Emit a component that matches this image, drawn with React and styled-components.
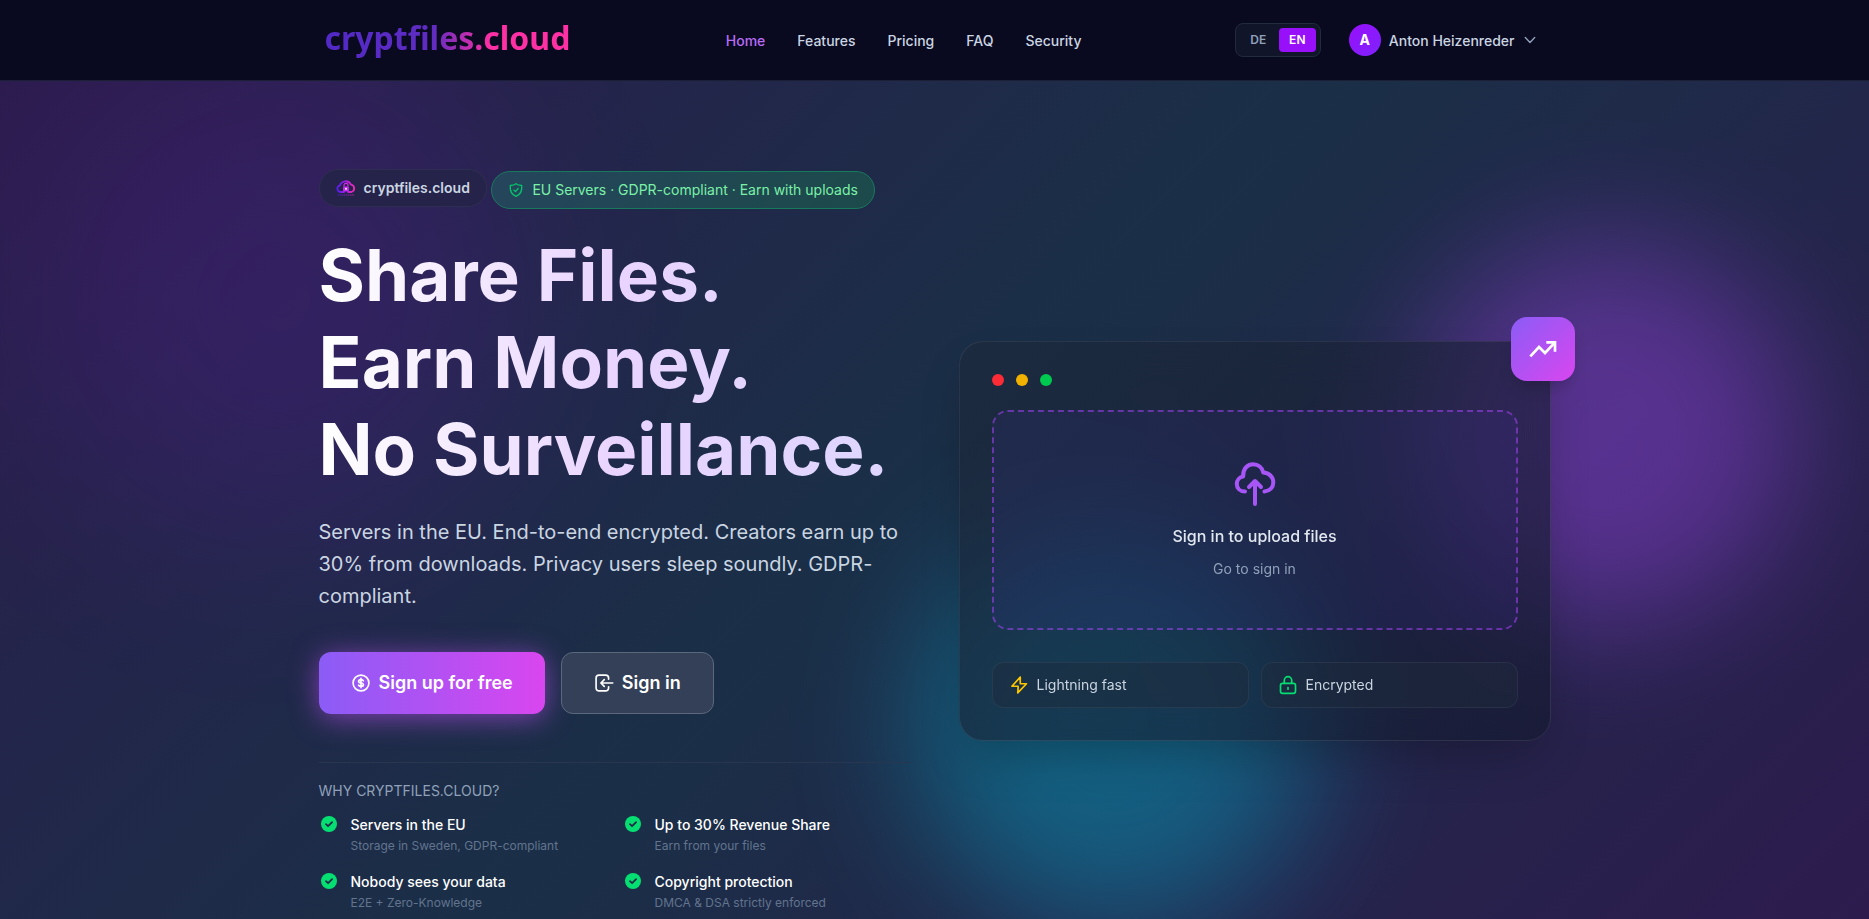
import React, { useState } from "react";
import styled, { createGlobalStyle, css } from "styled-components";

const navItems = ["Home", "Features", "Pricing", "FAQ", "Security"];

const reasons = [
  { title: "Servers in the EU", text: "Storage in Sweden, GDPR-compliant" },
  { title: "Up to 30% Revenue Share", text: "Earn from your files" },
  { title: "Nobody sees your data", text: "E2E + Zero-Knowledge" },
  { title: "Copyright protection", text: "DMCA & DSA strictly enforced" },
];

const CloudLogo = () => (
  <svg width="20" height="20" viewBox="0 0 20 20" fill="none" aria-hidden="true">
    <defs>
      <linearGradient id="cloud-logo" x1="0" y1="0" x2="20" y2="0" gradientUnits="userSpaceOnUse">
        <stop offset="0" stopColor="#4b1df0" />
        <stop offset="0.5" stopColor="#a51ee6" />
        <stop offset="1" stopColor="#ff2fa8" />
      </linearGradient>
    </defs>
    <path
      d="M8 14H4.5a3.3 3.3 0 0 1-.6-6.5A6 6 0 0 1 15 6.6a3.8 3.8 0 0 1 .4 7.4H12"
      stroke="url(#cloud-logo)"
      strokeWidth="1.8"
      strokeLinecap="round"
    />
    <path d="M8 9V7.4a2 2 0 0 1 4 0V9" stroke="#d02ee8" strokeWidth="1.2" />
    <rect x="7" y="8.6" width="6" height="5" rx="1.6" fill="#c42af0" />
    <circle cx="10" cy="10.8" r="1" fill="#fff" />
    <path d="M1.5 17h17" stroke="url(#cloud-logo)" strokeWidth="1" strokeDasharray="1.5 0.6" opacity="0.7" />
  </svg>
);

const ShieldIcon = () => (
  <svg width="16" height="16" viewBox="0 0 24 24" fill="none" stroke="#05c46b" strokeWidth="2" strokeLinecap="round" strokeLinejoin="round" aria-hidden="true">
    <path d="M12 2.5c2.6 2 5.3 2.5 8.5 2.7.8 8.3-1.7 13.6-8.5 16.3-6.8-2.7-9.3-8-8.5-16.3C6.7 5 9.4 4.5 12 2.5z" />
    <path d="M8.8 12.2l2.3 2.2 4.2-4.6" />
  </svg>
);

const CoinIcon = () => (
  <svg width="20" height="20" viewBox="0 0 24 24" fill="none" stroke="currentColor" strokeWidth="2" strokeLinecap="round" strokeLinejoin="round" aria-hidden="true">
    <circle cx="12" cy="12" r="9.5" />
    <path d="M14.8 9.4c-.3-.9-1.4-1.5-2.8-1.5-1.7 0-2.9.8-2.9 2s1 1.800 2.900 2.100 2.900.9 2.900 2.100-1.200 2-2.900 2c-1.500 0-2.600-.6-2.900-1.600M12 6.300v11.400" />
  </svg>
);

const LoginIcon = () => (
  <svg width="20" height="20" viewBox="0 0 24 24" fill="none" stroke="currentColor" strokeWidth="2" strokeLinecap="round" strokeLinejoin="round" aria-hidden="true">
    <path d="M17.5 7.5V6A3.5 3.5 0 0 0 14 2.500H6A3.500 3.500 0 0 0 2.500 6v12A3.500 3.500 0 0 0 6 21.500h8a3.500 3.500 0 0 0 3.500-3.500v-1.500" />
    <path d="M22.500 12H8.500M12.300 8L8.300 12l4 4" />
  </svg>
);

const CheckIcon = () => (
  <svg width="20" height="20" viewBox="0 0 20 20" aria-hidden="true">
    <circle cx="10" cy="10" r="8" fill="#05df72" />
    <path d="M7 10.2l2.1 2 4-4.1" fill="none" stroke="#1d2b49" strokeWidth="1.8" strokeLinecap="round" strokeLinejoin="round" />
  </svg>
);

const UploadIcon = () => (
  <svg width="48" height="48" viewBox="0 0 48 48" fill="none" stroke="currentColor" strokeWidth="4" strokeLinecap="round" strokeLinejoin="round" aria-hidden="true">
    <path d="M14 31.5C9 31.5 5.8 28.3 5.8 24c0-4 2.7-7 6.4-7.5C11.6 9.3 16.3 4.2 22 4.2c5.2 0 9.3 3.3 10.3 8.3C38 12.7 42.3 17 42.3 22.5c0 5-3.5 8.6-8.8 9" />
    <path d="M24 44V21.5M18 27l6-6 6 6" />
  </svg>
);

const TrendIcon = () => (
  <svg width="32" height="32" viewBox="0 0 24 24" fill="none" stroke="currentColor" strokeWidth="2" aria-hidden="true">
    <path d="M2.5 17.5L9 10.5l4.5 4.5L21 7" />
    <path d="M14.5 7H21v7" />
  </svg>
);

const BoltIcon = () => (
  <svg width="20" height="20" viewBox="0 0 24 24" fill="none" stroke="#fdc700" strokeWidth="2" strokeLinejoin="round" aria-hidden="true">
    <path d="M13.5 2.5L3.5 13.5H11L10.5 21.5l10.500-11h-7.500z" />
  </svg>
);

const LockIcon = () => (
  <svg width="20" height="20" viewBox="0 0 24 24" fill="none" stroke="#05df72" strokeWidth="2" strokeLinecap="round" strokeLinejoin="round" aria-hidden="true">
    <rect x="3" y="10" width="18" height="12" rx="2.5" />
    <path d="M7.5 10V6.5a4.5 4.5 0 0 1 9 0V10M12 15v2" />
  </svg>
);

const ChevronIcon = () => (
  <svg width="16" height="16" viewBox="0 0 16 16" fill="none" stroke="#90a1b9" strokeWidth="1.4" strokeLinecap="round" strokeLinejoin="round" aria-hidden="true">
    <path d="M3.3 5.5L8 10.5l4.7-5" />
  </svg>
);

const App = () => {
  const [active, setActive] = useState("Home");
  const [lang, setLang] = useState("EN");

  return (
    <Page>
      <GlobalStyle />
      <Header>
        <HeaderInner>
          <Logo href="#">cryptfiles.cloud</Logo>
          <Nav>
            {navItems.map((item) => (
              <NavLink
                key={item}
                href={`#${item.toLowerCase()}`}
                $active={active === item}
                onClick={() => setActive(item)}
              >
                {item}
              </NavLink>
            ))}
          </Nav>
          <Account>
            <LangSwitch>
              {["DE", "EN"].map((code) => (
                <LangButton key={code} type="button" $active={lang === code} onClick={() => setLang(code)}>
                  {code}
                </LangButton>
              ))}
            </LangSwitch>
            <UserButton type="button">
              <Avatar>A</Avatar>
              Anton Heizenreder
              <ChevronIcon />
            </UserButton>
          </Account>
        </HeaderInner>
      </Header>

      <Hero>
        <Glow $tone="violet" />
        <Glow $tone="purple" />
        <Glow $tone="cyan" />
        <HeroGrid>
          <div>
            <Badges>
              <Pill>
                <CloudLogo />
                cryptfiles.cloud
              </Pill>{" "}
              <Pill $green>
                <ShieldIcon />
                EU Servers · GDPR-compliant · Earn with uploads
              </Pill>
            </Badges>
            <Title>
              Share Files.
              <br />
              Earn Money.
              <br />
              No Surveillance.
            </Title>
            <Lead>
              Servers in the EU. End-to-end encrypted. Creators earn up to 30% from downloads. Privacy users sleep
              soundly. GDPR-compliant.
            </Lead>
            <Actions>
              <ActionButton type="button" $primary>
                <CoinIcon />
                Sign up for free
              </ActionButton>
              <ActionButton type="button">
                <LoginIcon />
                Sign in
              </ActionButton>
            </Actions>
            <Why>
              <WhyLabel>Why cryptfiles.cloud?</WhyLabel>
              <ReasonGrid>
                {reasons.map((reason) => (
                  <Reason key={reason.title}>
                    <CheckIcon />
                    <div>
                      <ReasonTitle>{reason.title}</ReasonTitle>
                      <ReasonText>{reason.text}</ReasonText>
                    </div>
                  </Reason>
                ))}
              </ReasonGrid>
            </Why>
          </div>

          <Card>
            <CardBadge>
              <TrendIcon />
            </CardBadge>
            <Dots>
              <Dot $color="#fb2c36" />
              <Dot $color="#f0b100" />
              <Dot $color="#00c950" />
            </Dots>
            <DropZone>
              <UploadIcon />
              <DropTitle>Sign in to upload files</DropTitle>
              <DropLink href="#signin">Go to sign in</DropLink>
            </DropZone>
            <Tiles>
              <Tile>
                <BoltIcon />
                Lightning fast
              </Tile>
              <Tile>
                <LockIcon />
                Encrypted
              </Tile>
            </Tiles>
          </Card>
        </HeroGrid>
      </Hero>
    </Page>
  );
};

const GlobalStyle = createGlobalStyle`
  * {
    box-sizing: border-box;
  }

  body {
    margin: 0;
    background: #1a2e48;
    font-family: Inter, "Liberation Sans", sans-serif;
    color: #ffffff;
    -webkit-font-smoothing: antialiased;
  }

  h1, p, ul {
    margin: 0;
    padding: 0;
  }

  button {
    font-family: inherit;
    cursor: pointer;
  }

  a {
    text-decoration: none;
  }

  svg {
    display: block;
    flex-shrink: 0;
  }
`;

const Page = styled.div`
  height: 100vh;
  overflow: hidden;
  display: flex;
  flex-direction: column;
  background: linear-gradient(135deg, #2d1b4e 0%, #1a2f47 50%, #2d1b4e 100%);
`;

const Header = styled.header`
  position: relative;
  z-index: 2;
  background: #09091f;
  border-bottom: 1px solid #1b2036;
`;

const HeaderInner = styled.div`
  display: flex;
  align-items: center;
  justify-content: space-between;
  max-width: 1280px;
  height: 80px;
  margin: 0 auto;
  padding: 0 24px;
`;

const Logo = styled.a`
  padding: 0 2px 4px 6px;
  font-family: "Noto Sans", sans-serif;
  font-size: 32px;
  line-height: 40px;
  font-weight: 700;
  color: transparent;
  background: linear-gradient(90deg, #5029c6 0%, #5f2cc2 45%, #ff30a4 68%, #ff30a4 100%);
  -webkit-background-clip: text;
  background-clip: text;
`;

const Nav = styled.nav`
  display: flex;
  gap: 32px;
`;

const NavLink = styled.a`
  font-size: 14px;
  line-height: 23px;
  font-weight: 500;
  color: ${(props) => (props.$active ? "#b86cf6" : "#cad5e2")};
`;

const Account = styled.div`
  display: flex;
  align-items: center;
  gap: 16px;
`;

const LangSwitch = styled.div`
  display: flex;
  gap: 2px;
  padding: 4px;
  background: #11152a;
  border: 1px solid #222a3e;
  border-radius: 8px;
`;

const LangButton = styled.button`
  min-width: 37px;
  padding: 0 10px;
  border: 0;
  border-radius: 4px;
  font-size: 12px;
  line-height: 24px;
  font-weight: 600;
  background: ${(props) => (props.$active ? "#9810fa" : "transparent")};
  color: ${(props) => (props.$active ? "#ffffff" : "#90a1b9")};
`;

const UserButton = styled.button`
  display: flex;
  align-items: center;
  gap: 8px;
  padding: 4px 12px;
  border: 0;
  background: none;
  color: #cad5e2;
  font-size: 14px;
  font-weight: 500;
`;

const Avatar = styled.span`
  width: 32px;
  border-radius: 50%;
  background: linear-gradient(135deg, #9810fa, #7f22fe);
  color: #ffffff;
  line-height: 32px;
  font-weight: 700;
  text-align: center;
`;

const Hero = styled.main`
  position: relative;
  flex: 1;
  padding-top: 88px;
`;

const glowTones = {
  violet: css`
    top: -20px;
    left: 40px;
    width: 480px;
    height: 480px;
    background: #9810fa;
    opacity: 0.12;
    filter: blur(100px);
  `,
  purple: css`
    top: 160px;
    right: 72px;
    width: 384px;
    height: 384px;
    background: #ad46ff;
    opacity: 0.38;
    filter: blur(64px);
  `,
  cyan: css`
    top: 448px;
    left: 49%;
    width: 400px;
    height: 400px;
    background: #00b8db;
    opacity: 0.38;
    filter: blur(64px);
  `,
};

const Glow = styled.div`
  position: absolute;
  border-radius: 50%;
  ${(props) => glowTones[props.$tone]}
`;

const HeroGrid = styled.div`
  position: relative;
  display: grid;
  grid-template-columns: 1fr 1fr;
  align-items: center;
  gap: 48px;
  max-width: 1280px;
  margin: 0 auto;
  padding: 0 24px;
`;

const Badges = styled.div`
  margin-bottom: 23px;
  line-height: 20px;
`;

const Pill = styled.span`
  display: inline-flex;
  align-items: center;
  gap: 8px;
  padding: 8px 16px;
  border: 1px solid ${(props) => (props.$green ? "#187a5c" : "#2d2f50")};
  border-radius: 20px;
  background: ${(props) => (props.$green ? "linear-gradient(135deg, #25455c, #1c4a4a)" : "#25234a")};
  color: ${(props) => (props.$green ? "#7bf1a8" : "#cad5e2")};
  font-size: 14px;
  line-height: 20px;
  font-weight: ${(props) => (props.$green ? 400 : 600)};
`;

const Title = styled.h1`
  margin-bottom: 23px;
  font-size: 71px;
  line-height: 87px;
  font-weight: 700;
  color: transparent;
  background: linear-gradient(90deg, #ffffff, #e9d4ff 50%, #ddd6ff);
  -webkit-background-clip: text;
  background-clip: text;
`;

const Lead = styled.p`
  margin-bottom: 40px;
  font-size: 20px;
  line-height: 32px;
  color: #cad5e2;
`;

const Actions = styled.div`
  display: flex;
  gap: 16px;
`;

const ActionButton = styled.button`
  display: flex;
  align-items: center;
  gap: 8px;
  padding: 16px 32px;
  border: 1px solid #5b687c;
  border-radius: 12px;
  background: #334058;
  color: #ffffff;
  font-size: 18px;
  line-height: 28px;
  font-weight: 600;

  ${(props) =>
    props.$primary &&
    css`
      border: 0;
      background: linear-gradient(90deg, #8b5cf6, #d946ef);
      box-shadow: 0 4px 28px rgba(192, 80, 247, 0.6);
    `}
`;

const Why = styled.section`
  margin-top: 48px;
  padding-top: 16px;
  border-top: 1px solid #28364f;
`;

const WhyLabel = styled.p`
  margin-bottom: 12px;
  font-size: 14px;
  line-height: 23px;
  color: #90a1b9;
  text-transform: uppercase;
`;

const ReasonGrid = styled.ul`
  display: grid;
  grid-template-columns: 1fr 1fr;
  gap: 16px;
  list-style: none;
`;

const Reason = styled.li`
  display: flex;
  align-items: flex-start;
  gap: 12px;
`;

const ReasonTitle = styled.p`
  font-size: 14px;
  line-height: 22px;
  font-weight: 500;
`;

const ReasonText = styled.p`
  font-size: 12px;
  line-height: 19px;
  color: #62748e;
`;

const Card = styled.div`
  position: relative;
  padding: 32px;
  border: 1px solid rgba(255, 255, 255, 0.08);
  border-radius: 24px;
  background: linear-gradient(135deg, rgba(30, 41, 59, 0.6), rgba(18, 24, 44, 0.6));
  backdrop-filter: blur(20px);
  box-shadow: 0 24px 48px -12px rgba(0, 0, 0, 0.25);
`;

const CardBadge = styled.div`
  position: absolute;
  top: -25px;
  right: -25px;
  display: flex;
  align-items: center;
  justify-content: center;
  width: 64px;
  height: 64px;
  border-radius: 16px;
  background: linear-gradient(135deg, #8b5cf6, #d946ef);
  box-shadow: 0 10px 16px -4px rgba(0, 0, 0, 0.2);
`;

const Dots = styled.div`
  display: flex;
  gap: 12px;
  margin-bottom: 24px;
`;

const Dot = styled.span`
  width: 12px;
  height: 12px;
  border-radius: 50%;
  background: ${(props) => props.$color};
`;

const DropZone = styled.div`
  display: flex;
  flex-direction: column;
  align-items: center;
  padding: 48px;
  border: 2px dashed rgba(173, 70, 255, 0.5);
  border-radius: 16px;
  background: rgba(80, 50, 200, 0.1);
  color: #a855f7;
`;

const DropTitle = styled.p`
  margin: 16px 0 10px;
  font-size: 16px;
  line-height: 24px;
  font-weight: 500;
  color: #e2e8f0;
`;

const DropLink = styled.a`
  font-size: 14px;
  line-height: 22px;
  color: #90a1b9;
`;

const Tiles = styled.div`
  display: grid;
  grid-template-columns: 1fr 1fr;
  gap: 12px;
  margin-top: 32px;
`;

const Tile = styled.div`
  display: flex;
  align-items: center;
  gap: 8px;
  padding: 12px 16px;
  border: 1px solid rgba(255, 255, 255, 0.06);
  border-radius: 12px;
  background: rgba(30, 41, 59, 0.5);
  color: #cad5e2;
  font-size: 14px;
  line-height: 20px;
`;

export default App;
